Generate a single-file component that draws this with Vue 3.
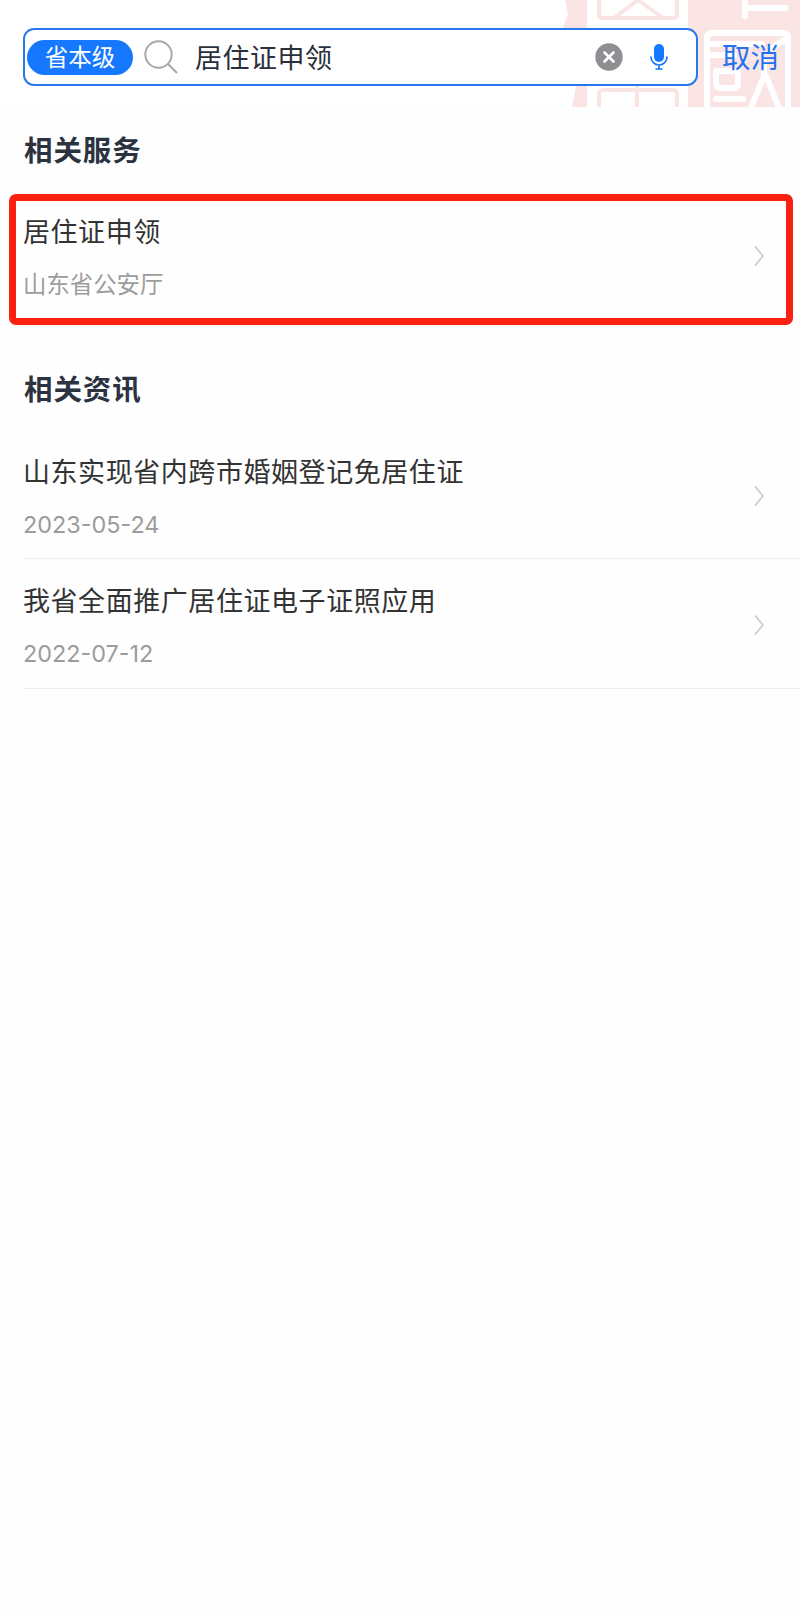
<template>
  <div class="search-page">
    <header class="search-header">
      <svg class="seal" viewBox="0 0 240 107" aria-hidden="true">
        <g fill="#fae5e4">
          <path d="M5 0h22v107H12l5-25V30H2l3-8 3-8z" />
          <path d="M128 0h112v107H128z" />
        </g>
        <g fill="none" stroke="#fae5e4" stroke-width="4">
          <path d="M39 0v15q0 3 3 3h72q3 0 3-3V0" />
          <path d="M54 18L78 0l25 18" />
          <path d="M39 107V94q0-4 4-4h70q4 0 4 4v13" />
          <path d="M77 86v21" />
        </g>
        <g fill="none" stroke="#fff" stroke-width="6" stroke-linecap="round" stroke-linejoin="round">
          <path d="M185 0v16M185 8h41" />
          <path d="M147 110V38q0-5 5-5h71q5 0 5 5v72" />
          <path d="M152 44h50M152 55h22M212 48l12-8" />
          <path d="M156 71v12q0 5 4 5h14q4 0 4-5V71z" />
          <path d="M156 99h27M204 60v16l-14 34M206 76l14 34" />
        </g>
      </svg>
      <div class="search-box">
        <span class="region-tag">省本级</span>
        <svg class="icon-search" viewBox="0 0 34 34">
          <circle cx="14.5" cy="14.5" r="13.2" />
          <path d="M24 24l9 9" />
        </svg>
        <span class="search-text">{{ keyword }}</span>
        <svg class="icon-clear" viewBox="0 0 28 28" @click="keyword = ''">
          <circle cx="14" cy="14" r="13.7" />
          <path d="M9.5 9.5l9 9M18.5 9.5l-9 9" />
        </svg>
        <svg class="icon-mic" viewBox="0 0 18 26">
          <rect x="4" y="0" width="10" height="18" rx="5" />
          <path d="M1 12.5v0.5a8 8 0 0 0 16 0v-0.5M9 21v4M5.5 25h7" />
        </svg>
      </div>
      <a class="cancel">取消</a>
    </header>

    <section v-for="section in sections" :key="section.title" class="section">
      <h2 class="section-title">{{ section.title }}</h2>
      <div
        v-for="item in section.items"
        :key="item.title"
        class="row"
        :class="{ 'row-marked': item.marked }"
      >
        <div class="row-body">
          <div class="row-title">{{ item.title }}</div>
          <div class="row-sub">{{ item.sub }}</div>
        </div>
        <svg class="chevron" viewBox="0 0 10 20">
          <path d="M1 0.5l8 9.5-8 9.5" />
        </svg>
      </div>
    </section>
  </div>
</template>

<script setup>
import { ref } from 'vue';

const keyword = ref('居住证申领');

const sections = [
  {
    title: '相关服务',
    items: [{ title: '居住证申领', sub: '山东省公安厅', marked: true }]
  },
  {
    title: '相关资讯',
    items: [
      { title: '山东实现省内跨市婚姻登记免居住证', sub: '2023-05-24' },
      { title: '我省全面推广居住证电子证照应用', sub: '2022-07-12' }
    ]
  }
];
</script>

<style>
body {
  background: #fefefe;
}
</style>

<style scoped>
.search-page {
  min-height: 1619px;
  font-family: Inter, "Noto Sans CJK SC", sans-serif;
  color: #333;
}

.search-header {
  position: relative;
  display: flex;
  align-items: center;
  height: 107px;
  padding: 7px 20px 0 23px;
  box-sizing: border-box;
  background: #fff;
}

/* decorative seal behind the search bar */
.seal {
  position: absolute;
  top: 0;
  right: 0;
  width: 240px;
  height: 107px;
}

.search-box {
  position: relative;
  display: flex;
  align-items: center;
  width: 675px;
  height: 58px;
  padding: 0 28px 0 2px;
  box-sizing: border-box;
  border: 2px solid #2a78ee;
  border-radius: 11px;
  background: #fff;
}

.region-tag {
  width: 106px;
  height: 35px;
  border-radius: 18px;
  background: #1677ff;
  color: #fff;
  font-size: 23.5px;
  line-height: 35px;
  text-align: center;
}

.icon-search {
  width: 34px;
  height: 34px;
  margin-left: 11px;
  fill: none;
  stroke: #a8a8a8;
  stroke-width: 2;
}

.search-text {
  flex: 1;
  margin-left: 17px;
  padding-bottom: 2px;
  font-size: 27px;
  letter-spacing: 0.5px;
  color: #2b303b;
}

.icon-clear {
  width: 28px;
  height: 28px;
  fill: #8e8e93;
}

.icon-clear path {
  stroke: #fff;
  stroke-width: 2.6;
  stroke-linecap: round;
}

.icon-mic {
  width: 18px;
  height: 26px;
  margin-left: 27px;
  fill: #1677ff;
}

.icon-mic path {
  fill: none;
  stroke: #1677ff;
  stroke-width: 1.7;
}

.cancel {
  position: relative;
  margin-left: 24px;
  padding-bottom: 3px;
  font-size: 28.5px;
  color: #2272ee;
  white-space: nowrap;
}

.section + .section {
  margin-top: 27px;
}

.section-title {
  height: 83px;
  margin: 0;
  padding: 2px 0 0 24px;
  box-sizing: border-box;
  font-size: 28.5px;
  font-weight: 600;
  letter-spacing: 0.9px;
  line-height: 83px;
  color: #2b3240;
}

.section + .section .section-title {
  padding-top: 1px;
}

.row {
  position: relative;
  display: flex;
  align-items: center;
  height: 129.5px;
  margin-left: 23px;
  padding-right: 36px;
  box-sizing: border-box;
  border-bottom: 1.5px solid #efefef;
}

.row-marked {
  border-bottom-color: #f8f8f8;
}

/* highlight frame drawn around the matched service */
.row-marked::after {
  content: "";
  position: absolute;
  top: 4px;
  left: -14px;
  right: 7px;
  height: 131px;
  box-sizing: border-box;
  border: 7px solid #fa2012;
  border-radius: 7px;
}

.row-body {
  flex: 1;
}

.row-title {
  padding-top: 7px;
  font-size: 27px;
  letter-spacing: 0.56px;
  line-height: 40px;
}

.row-sub {
  margin-top: 14px;
  font-size: 23.4px;
  line-height: 35px;
  color: #9c9c9c;
}

.chevron {
  width: 10px;
  height: 20px;
  margin-top: 4px;
  fill: none;
  stroke: #c8c8c8;
  stroke-width: 1.6;
}
</style>
